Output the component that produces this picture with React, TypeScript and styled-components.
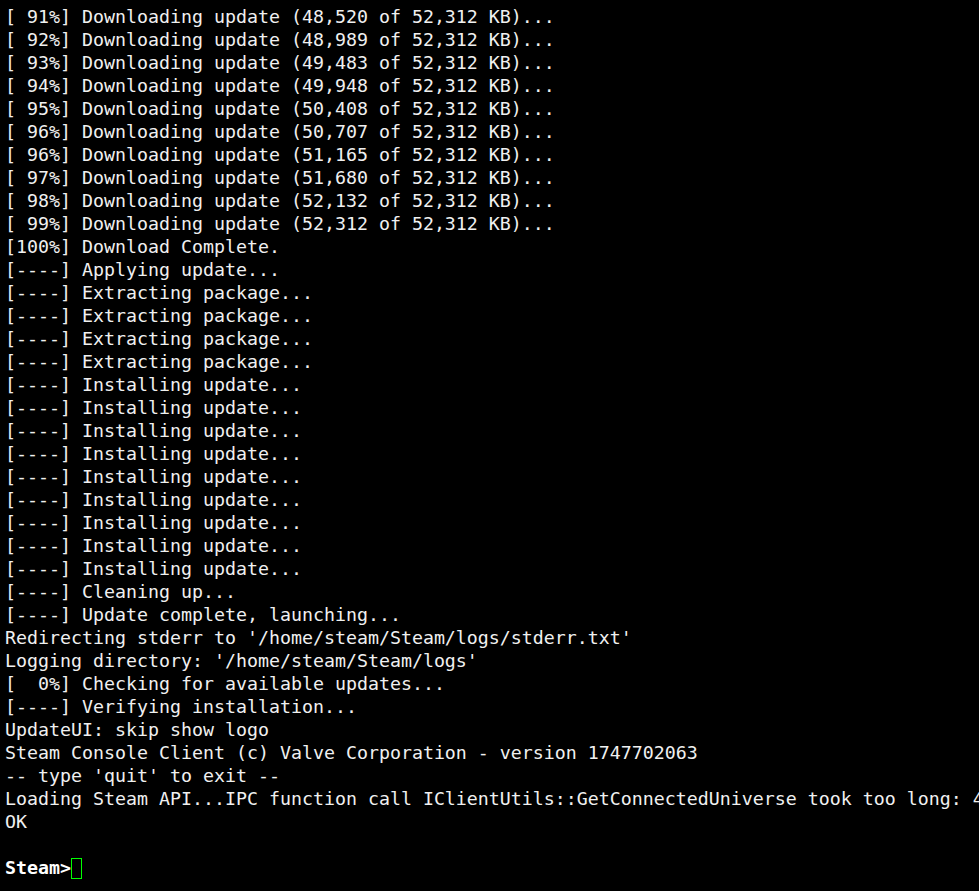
import React from "react";
import styled, { createGlobalStyle } from "styled-components";

const Global = createGlobalStyle`
  html, body {
    margin: 0;
    padding: 0;
    background: #000000;
    overflow: hidden;
  }
`;

const Terminal = styled.div`
  width: 979px;
  height: 891px;
  box-sizing: border-box;
  padding: 5px 0 0 5px;
  background: #000000;
  color: #f0f0f0;
  font-family: "DejaVu Sans Mono", "Liberation Mono", monospace;
  font-size: 18.27px;
  line-height: 23px;
  overflow: hidden;
`;

const Line = styled.div`
  white-space: pre;
  height: 23px;
`;

const Prompt = styled.span`
  font-weight: bold;
  color: #ffffff;
`;

const Cursor = styled.span`
  display: inline-block;
  box-sizing: border-box;
  width: 11px;
  height: 21px;
  border: 1px solid #00ff00;
  vertical-align: -5px;
`;

const lines: string[] = [
  "[ 91%] Downloading update (48,520 of 52,312 KB)...",
  "[ 92%] Downloading update (48,989 of 52,312 KB)...",
  "[ 93%] Downloading update (49,483 of 52,312 KB)...",
  "[ 94%] Downloading update (49,948 of 52,312 KB)...",
  "[ 95%] Downloading update (50,408 of 52,312 KB)...",
  "[ 96%] Downloading update (50,707 of 52,312 KB)...",
  "[ 96%] Downloading update (51,165 of 52,312 KB)...",
  "[ 97%] Downloading update (51,680 of 52,312 KB)...",
  "[ 98%] Downloading update (52,132 of 52,312 KB)...",
  "[ 99%] Downloading update (52,312 of 52,312 KB)...",
  "[100%] Download Complete.",
  "[----] Applying update...",
  "[----] Extracting package...",
  "[----] Extracting package...",
  "[----] Extracting package...",
  "[----] Extracting package...",
  "[----] Installing update...",
  "[----] Installing update...",
  "[----] Installing update...",
  "[----] Installing update...",
  "[----] Installing update...",
  "[----] Installing update...",
  "[----] Installing update...",
  "[----] Installing update...",
  "[----] Installing update...",
  "[----] Cleaning up...",
  "[----] Update complete, launching...",
  "Redirecting stderr to '/home/steam/Steam/logs/stderr.txt'",
  "Logging directory: '/home/steam/Steam/logs'",
  "[  0%] Checking for available updates...",
  "[----] Verifying installation...",
  "UpdateUI: skip show logo",
  "Steam Console Client (c) Valve Corporation - version 1747702063",
  "-- type 'quit' to exit --",
  "Loading Steam API...IPC function call IClientUtils::GetConnectedUniverse took too long: 4",
  "OK",
  "",
];

export default function App() {
  return (
    <>
      <Global />
      <Terminal>
        {lines.map((l, i) => (
          <Line key={i}>{l}</Line>
        ))}
        <Line>
          <Prompt>Steam&gt;</Prompt>
          <Cursor />
        </Line>
      </Terminal>
    </>
  );
}
